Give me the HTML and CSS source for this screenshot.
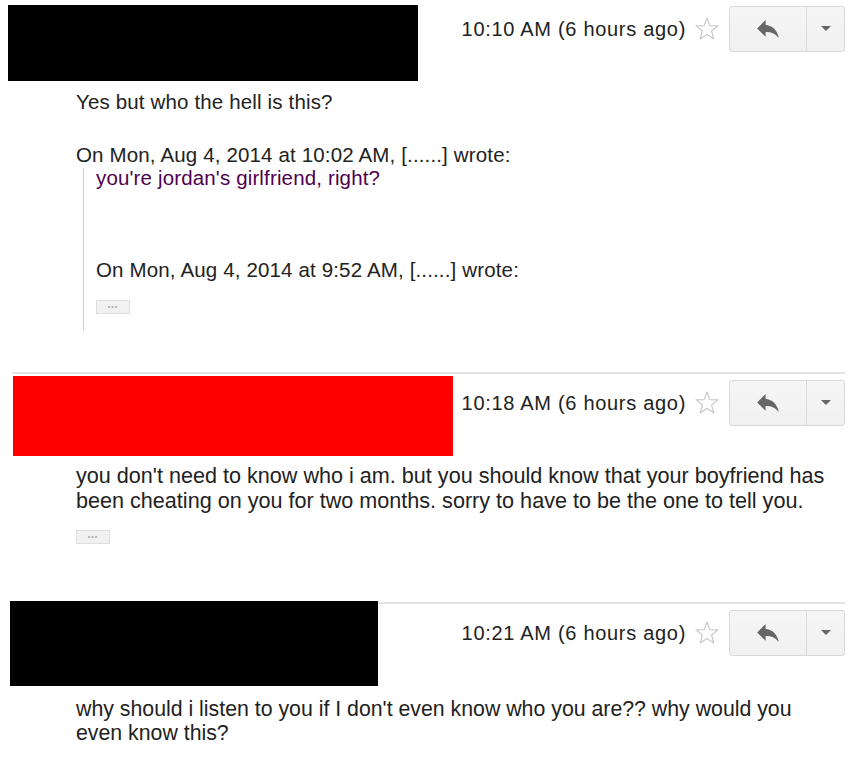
FILE: index.html
```html
<!DOCTYPE html>
<html lang="en">
<head>
  <meta charset="UTF-8">
  <title>Conversation</title>
  <link rel="stylesheet" href="styles.css">
</head>
<body>

  <div class="msg msg-first">
    <div class="msg-head">
      <div class="redact redact-1"></div>
      <div class="meta">
        <span class="time">10:10 AM (6 hours ago)</span>
        <svg class="star" width="26" height="26" viewBox="0 0 26 26"><polygon points="13,2 15.8,9.6 24,9.9 17.6,15 19.8,23 13,18.4 6.2,23 8.4,15 2,9.9 10.2,9.6" fill="none" stroke="#c9c9c9" stroke-width="1.2" stroke-linejoin="round"/></svg>
        <div class="btns">
          <button class="reply-btn"><svg width="22" height="18" viewBox="3 5 18 15"><path d="M10 9V5l-7 7 7 7v-4.1c5 0 8.5 1.6 11 5.1-1-5-4-10-11-11z" fill="#666"/></svg></button>
          <button class="more-btn"><svg width="10" height="6" viewBox="0 0 10 6"><polygon points="0,0 10,0 5,5" fill="#666"/></svg></button>
        </div>
      </div>
    </div>
    <div class="msg-body wide-text">
      <p class="first-line">Yes but who the hell is this?</p>
      <p class="attrib">On Mon, Aug 4, 2014 at 10:02 AM, [......] wrote:</p>
      <blockquote class="quote">
        <p class="quoted">you're jordan's girlfriend, right?</p>
        <p class="attrib-inner">On Mon, Aug 4, 2014 at 9:52 AM, [......] wrote:</p>
        <div class="dots">•••</div>
      </blockquote>
    </div>
  </div>

  <div class="msg msg-second">
    <div class="msg-head">
      <div class="redact redact-2"></div>
      <div class="meta">
        <span class="time">10:18 AM (6 hours ago)</span>
        <svg class="star" width="26" height="26" viewBox="0 0 26 26"><polygon points="13,2 15.8,9.6 24,9.9 17.6,15 19.8,23 13,18.4 6.2,23 8.4,15 2,9.9 10.2,9.6" fill="none" stroke="#c9c9c9" stroke-width="1.2" stroke-linejoin="round"/></svg>
        <div class="btns">
          <button class="reply-btn"><svg width="22" height="18" viewBox="3 5 18 15"><path d="M10 9V5l-7 7 7 7v-4.1c5 0 8.5 1.6 11 5.1-1-5-4-10-11-11z" fill="#666"/></svg></button>
          <button class="more-btn"><svg width="10" height="6" viewBox="0 0 10 6"><polygon points="0,0 10,0 5,5" fill="#666"/></svg></button>
        </div>
      </div>
    </div>
    <div class="msg-body">
      <p class="first-line">you don't need to know who i am. but you should know that your boyfriend has been cheating on you for two months. sorry to have to be the one to tell you.</p>
      <div class="dots">•••</div>
    </div>
  </div>

  <div class="msg msg-third">
    <div class="msg-head">
      <div class="redact redact-3"></div>
      <div class="meta">
        <span class="time">10:21 AM (6 hours ago)</span>
        <svg class="star" width="26" height="26" viewBox="0 0 26 26"><polygon points="13,2 15.8,9.6 24,9.9 17.6,15 19.8,23 13,18.4 6.2,23 8.4,15 2,9.9 10.2,9.6" fill="none" stroke="#c9c9c9" stroke-width="1.2" stroke-linejoin="round"/></svg>
        <div class="btns">
          <button class="reply-btn"><svg width="22" height="18" viewBox="3 5 18 15"><path d="M10 9V5l-7 7 7 7v-4.1c5 0 8.5 1.6 11 5.1-1-5-4-10-11-11z" fill="#666"/></svg></button>
          <button class="more-btn"><svg width="10" height="6" viewBox="0 0 10 6"><polygon points="0,0 10,0 5,5" fill="#666"/></svg></button>
        </div>
      </div>
    </div>
    <div class="msg-body">
      <p class="first-line">why should i listen to you if I don't even know who you are?? why would you even know this?</p>
    </div>
  </div>

</body>
</html>
```

FILE: styles.css
```css
body {
  margin: 0;
  font-family: "Liberation Sans", Arial, sans-serif;
  color: #222;
  background: #fff;
}
p { margin: 0; }

.msg { margin-right: 5px; }
.msg-head { display: flex; align-items: flex-start; }
.redact { flex: none; }
.redact-1 { margin: 5px 0 0 8px; width: 410px; height: 76px; background: #000; }
.redact-2 { margin: 2px 0 0 1px; width: 440px; height: 80px; background: #f00; }
.redact-3 { margin: -3px 0 0 -2px; width: 368px; height: 85px; background: #000; }

.meta {
  margin-left: auto;
  margin-top: 6px;
  height: 46px;
  display: flex;
  align-items: center;
}
.time { font-size: 20px; letter-spacing: 0.7px; color: #222; }
.star { margin-left: 8px; }
.btns {
  margin-left: 9px;
  display: flex;
  height: 46px;
  border: 1px solid #d9d9d9;
  border-radius: 3px;
  box-sizing: border-box;
  background: linear-gradient(#f6f6f6, #f0f0f0);
}
.btns button {
  background: none;
  border: none;
  padding: 0;
  cursor: pointer;
  display: flex;
  align-items: center;
  justify-content: center;
}
.reply-btn { width: 77px; border-right: 1px solid #dadada !important; }
.more-btn { width: 37px; }

.msg-body { padding-left: 76px; font-size: 21.6px; line-height: 25px; }
.msg-body p { max-width: 760px; }
.wide-text { font-size: 20.5px; letter-spacing: 0.15px; line-height: 24px; }

.msg-first .first-line { margin-top: 9px; }
.attrib { margin-top: 29px; }
.quote {
  margin: 1px 0 0 7px;
  border-left: 1px solid #ccc;
  padding: 0 0 16px 12px;
}
.quoted { color: #500050; line-height: 20px; }
.attrib-inner { margin-top: 70px; }

.dots {
  width: 34px;
  height: 14px;
  box-sizing: border-box;
  background: #f1f1f1;
  border: 1px solid #dedede;
  color: #aaa;
  font-size: 7px;
  line-height: 12px;
  letter-spacing: 1px;
  text-align: center;
}
.quote .dots { margin-top: 18px; }

.msg-second {
  margin-top: 42px;
  margin-left: 12px;
  border-top: 2px solid #e3e3e3;
}
.msg-second .msg-body { padding-left: 64px; }
.msg-second .first-line { margin-top: 7px; }
.msg-second .dots { margin-top: 17px; }

.msg-third {
  margin-top: 58px;
  margin-left: 12px;
  border-top: 2px solid #e3e3e3;
}
.msg-third .msg-body { padding-left: 64px; line-height: 24px; font-size: 21.3px; }
.msg-third .first-line { margin-top: 11px; }
```
